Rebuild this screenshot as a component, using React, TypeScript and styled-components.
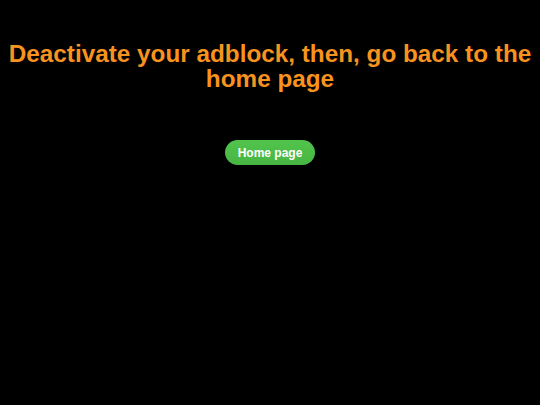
import styled, { createGlobalStyle } from "styled-components";

const Global = createGlobalStyle`
  html, body {
    margin: 0;
    background: #000;
  }
  body {
    font-family: "Liberation Sans", Arial, sans-serif;
  }
`;

const Page = styled.main`
  display: flex;
  flex-direction: column;
  align-items: center;
  padding: 41px 4px 0;
  min-height: 405px;
  box-sizing: border-box;
`;

const Title = styled.h1`
  margin: 0;
  color: #f7931e;
  font-family: "Liberation Sans", Arial, sans-serif;
  font-size: 24.3px;
  line-height: 25px;
  font-weight: bold;
  text-align: center;
`;

const HomeButton = styled.a`
  display: inline-flex;
  align-items: center;
  justify-content: center;
  margin-top: 49px;
  width: 90px;
  height: 25px;
  border-radius: 13px;
  background: linear-gradient(#52c44d, #47b542);
  color: #fff;
  font-family: "Liberation Sans", Arial, sans-serif;
  font-size: 12px;
  font-weight: bold;
  text-decoration: none;
`;

export default function App() {
  return (
    <>
      <Global />
      <Page>
        <Title>Deactivate your adblock, then, go back to the home page</Title>
        <HomeButton href="#">Home page</HomeButton>
      </Page>
    </>
  );
}
